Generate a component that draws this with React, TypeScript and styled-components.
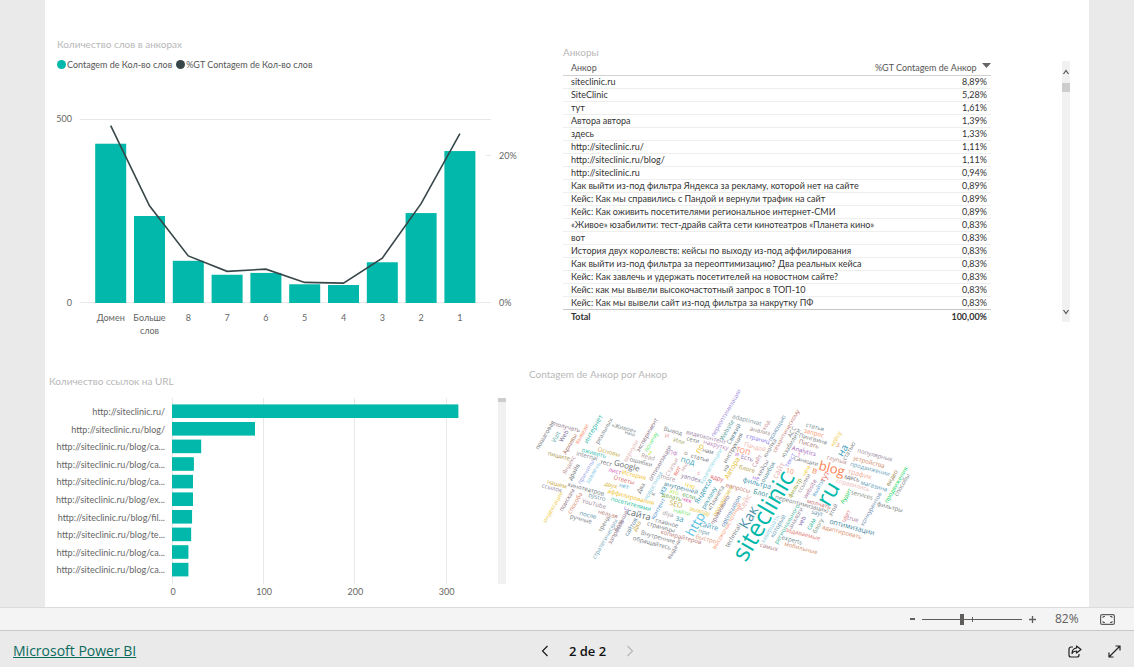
import React from "react";
import styled, { createGlobalStyle } from "styled-components";

const TEAL = "#01b8aa";
const SLATE = "#374649";

const GlobalStyle = createGlobalStyle`
  * { box-sizing: border-box; }
  html, body { margin: 0; padding: 0; }
  body {
    background: #eaeaea;
    color: #333;
    font-family: Lato, "Open Sans", sans-serif;
    font-size: 9px;
    line-height: 13px;
  }
  button { font: inherit; color: inherit; }
`;

const Page = styled.div`
  display: flex;
  flex-direction: column;
  min-height: 100vh;
`;

const Report = styled.main`
  flex: 1;
  margin: 0 45px;
  background: #fff;
  display: grid;
  grid-template-columns: minmax(0, 480fr) minmax(0, 564fr);
  grid-template-rows: auto 1fr;
`;

const Panel = styled.section<{ $pad: string }>`
  padding: ${(p) => p.$pad};
  min-width: 0;
`;

const Title = styled.h2<{ $inset?: number }>`
  margin: 0 0 0 ${(p) => p.$inset ?? 0}px;
  font-size: 10px;
  line-height: 14px;
  font-weight: 400;
  color: #b8b8b8;
  white-space: nowrap;
`;

const Legend = styled.ul`
  list-style: none;
  margin: 7px 0 9px 12px;
  padding: 0;
  display: flex;
  gap: 4px;
  color: #555;
  white-space: nowrap;
`;

const LegendItem = styled.li<{ $color: string }>`
  display: flex;
  align-items: center;
  gap: 1px;
  &::before {
    content: "";
    width: 9px;
    height: 9px;
    border-radius: 50%;
    background: ${(p) => p.$color};
  }
`;

const Chart = styled.svg`
  display: block;
  width: 100%;
  height: auto;
  text {
    font-size: 9px;
    fill: #666;
  }
`;

const ChartRow = styled.div`
  display: flex;
  align-items: flex-start;
  margin-top: 10px;
`;

const TableRow = styled.div`
  display: flex;
  align-items: flex-start;
  justify-content: space-between;
  margin-top: 2px;
`;

const Table = styled.table`
  width: 428px;
  margin-top: 1px;
  table-layout: fixed;
  border-collapse: collapse;
  white-space: nowrap;
  th, td { padding: 0 4px 0 8px; height: 13px; line-height: 12px; text-align: left; }
  th:first-child { width: 71%; }
  th:last-child, td:last-child { text-align: right; }
  tbody tr { border-bottom: 1px solid #eee; }
  thead th { font-weight: 400; color: #555; border-bottom: 1px solid #d2d2d2; }
  tfoot td { font-weight: 700; height: 15px; border-top: 1px solid #c8c8c8; }
`;

const SortArrow = styled.svg`
  width: 9px;
  height: 5px;
  margin-left: 5px;
  vertical-align: 3px;
`;

const Scrollbar = styled.div<{ $height: number }>`
  flex: none;
  width: 8px;
  height: ${(p) => p.$height}px;
  background: #f1f1f1;
  display: flex;
  flex-direction: column;
  align-items: center;
`;

const Thumb = styled.div<{ $height: number }>`
  width: 8px;
  height: ${(p) => p.$height}px;
  background: #cdcdcd;
`;

const ScrollArrow = styled.svg<{ $end?: boolean }>`
  width: 6px;
  height: 6px;
  margin: ${(p) => (p.$end ? "auto 0 7px" : "8px 0")};
`;

const Cloud = styled.svg`
  display: block;
  width: 100%;
  height: auto;
  margin-top: 3px;
  font-family: "Open Sans", "Noto Sans", sans-serif;
`;

const StatusBar = styled.div`
  height: 24px;
  background: #f4f4f4;
  border-top: 1px solid #dcdcdc;
  border-bottom: 1px solid #c8c8c8;
  display: flex;
  align-items: center;
  justify-content: flex-end;
  padding-right: 19px;
  color: #605e5c;
  font-family: "Open Sans", "Noto Sans", sans-serif;
  font-size: 12px;
`;

const ZoomButton = styled.button`
  border: 0;
  background: none;
  padding: 0;
  width: 20px;
  height: 22px;
  display: flex;
  align-items: center;
  justify-content: center;
`;

const SliderWrap = styled.div`
  display: flex;
  width: 100px;
  background: linear-gradient(#605e5c, #605e5c) center / 1px 5px no-repeat;
`;

const Slider = styled.input`
  appearance: none;
  width: 100%;
  height: 12px;
  margin: 0;
  background: linear-gradient(#605e5c, #605e5c) center / 100% 1px no-repeat;
  &::-webkit-slider-thumb {
    appearance: none;
    width: 4px;
    height: 11px;
    background: #605e5c;
  }
`;

const Percent = styled.output`
  width: 26px;
  margin: 0 19px 0 13px;
  font-size: 12px;
  line-height: 16px;
`;

const Footer = styled.footer`
  height: 36px;
  display: grid;
  grid-template-columns: 1fr auto 1fr;
  align-items: center;
  padding: 4px 13px 0;
  font-family: "Open Sans", "Noto Sans", sans-serif;
`;

const BrandLink = styled.a`
  color: #0b6a5d;
  font-size: 14px;
  line-height: 18px;
  text-decoration: underline;
`;

const Pager = styled.nav`
  display: flex;
  align-items: center;
  gap: 20px;
  margin-left: 41px;
  color: #111;
  font-size: 13px;
  line-height: 18px;
  font-weight: 600;
`;

const Actions = styled.div`
  display: flex;
  justify-content: flex-end;
  gap: 26px;
  color: #222;
`;

const IconButton = styled.button`
  border: 0;
  background: none;
  padding: 0;
  display: flex;
  &:disabled { color: #b5b5b5; }
`;

/* ---------- combo chart ---------- */

const wordCounts = [
  { label: ["Домен"], count: 434, share: 24.1 },
  { label: ["Больше", "слов"], count: 237, share: 13.2 },
  { label: ["8"], count: 115, share: 6.4 },
  { label: ["7"], count: 77, share: 4.3 },
  { label: ["6"], count: 82, share: 4.6 },
  { label: ["5"], count: 51, share: 2.8 },
  { label: ["4"], count: 49, share: 2.7 },
  { label: ["3"], count: 111, share: 6.1 },
  { label: ["2"], count: 245, share: 13.5 },
  { label: ["1"], count: 414, share: 23 },
];

function ComboChart() {
  const base = 223;
  const cx = (i: number) => 65.7 + i * 38.8;
  const points = wordCounts.map((d, i) => `${cx(i)},${base - d.share * 7.36}`).join(" ");
  return (
    <Chart viewBox="0 0 480 260" role="img" aria-label="Количество слов в анкорах">
      <path d="M35 39.5H446M35 222.5H446M441 75.5H446" stroke="#e8e8e8" fill="none" />
      {wordCounts.map((d, i) => (
        <rect key={i} x={cx(i) - 15.5} y={base - d.count * 0.367} width={31} height={d.count * 0.367} fill={TEAL} />
      ))}
      <polyline points={points} fill="none" stroke={SLATE} strokeWidth="1.6" />
      <text x="27" y="42" textAnchor="end">500</text>
      <text x="27" y="226" textAnchor="end">0</text>
      <text x="454" y="79">20%</text>
      <text x="454" y="226">0%</text>
      {wordCounts.map((d, i) =>
        d.label.map((line, j) => (
          <text key={line} x={cx(i)} y={241 + j * 13} textAnchor="middle">{line}</text>
        ))
      )}
    </Chart>
  );
}

/* ---------- url chart ---------- */

const urls: [string, number][] = [
  ["http://siteclinic.ru/", 314],
  ["http://siteclinic.ru/blog/", 91],
  ["http://siteclinic.ru/blog/ca...", 32],
  ["http://siteclinic.ru/blog/ca...", 24],
  ["http://siteclinic.ru/blog/ca...", 23],
  ["http://siteclinic.ru/blog/ex...", 23],
  ["http://siteclinic.ru/blog/fil...", 22],
  ["http://siteclinic.ru/blog/te...", 21],
  ["http://siteclinic.ru/blog/ca...", 18],
  ["http://siteclinic.ru/blog/ca...", 18],
];

function UrlChart() {
  const x0 = 127;
  const unit = 0.912;
  return (
    <Chart viewBox="0 0 453 204" role="img" aria-label="Количество ссылок на URL">
      {[0, 100, 200, 300].map((v) => (
        <g key={v}>
          <path d={`M${Math.round(x0 + v * unit) + 0.5} 0V186`} stroke="#e8e8e8" />
          <text x={x0 + v * unit + 1} y="197" textAnchor="middle">{v}</text>
        </g>
      ))}
      {urls.map(([label, value], i) => (
        <g key={i}>
          <text x="120" y={17 + i * 17.6} textAnchor="end">{label}</text>
          <rect x={x0} y={6.4 + i * 17.6} width={value * unit} height="13.6" fill={TEAL} />
        </g>
      ))}
    </Chart>
  );
}

/* ---------- table ---------- */

const anchors: [string, string][] = [
  ["siteclinic.ru", "8,89%"],
  ["SiteClinic", "5,28%"],
  ["тут", "1,61%"],
  ["Автора автора", "1,39%"],
  ["здесь", "1,33%"],
  ["http://siteclinic.ru/", "1,11%"],
  ["http://siteclinic.ru/blog/", "1,11%"],
  ["http://siteclinic.ru", "0,94%"],
  ["Как выйти из-под фильтра Яндекса за рекламу, которой нет на сайте", "0,89%"],
  ["Кейс: Как мы справились с Пандой и вернули трафик на сайт", "0,89%"],
  ["Кейс: Как оживить посетителями региональное интернет-СМИ", "0,89%"],
  ["«Живое» юзабилити: тест-драйв сайта сети кинотеатров «Планета кино»", "0,83%"],
  ["вот", "0,83%"],
  ["История двух королевств: кейсы по выходу из-под аффилирования", "0,83%"],
  ["Как выйти из-под фильтра за переоптимизацию? Два реальных кейса", "0,83%"],
  ["Кейс: Как завлечь и удержать посетителей на новостном сайте?", "0,83%"],
  ["Кейс: как мы вывели высокочастотный запрос в ТОП-10", "0,83%"],
  ["Кейс: Как мы вывели сайт из-под фильтра за накрутку ПФ", "0,83%"],
];

/* ---------- word cloud: text, centre x, centre y, size, direction, colour ---------- */

type Word = [string, number, number, number, "up" | "down", string];

const words: Word[] = [
  ["siteclinic", 762, 514, 25, "up", TEAL],
  ["ru", 827, 492, 23, "up", TEAL],
  ["http", 695, 523, 13, "up", "#5cc0e0"],
  ["Как", 748, 516, 14, "up", "#4a8fa8"],
  ["blog", 832, 467, 13, "down", "#fd7f50"],
  ["сайта", 639, 513, 9, "down", "#5f6b6d"],
  ["на", 842, 449, 10, "up", "#3599b8"],
  ["Google", 627, 464, 8, "down", "#5f6b6d"],
  ["пошаговая", 545, 434, 6, "up", "#6b7073"],
  ["получать", 567, 426, 6, "down", "#8c7386"],
  ["Vizit", 556, 436, 6, "up", "#4a9aa0"],
  ["Web", 564, 435, 6, "up", "#74658f"],
  ["Архивы", 570, 443, 6, "up", "#a66f5c"],
  ["вывели", 582, 433, 6, "up", "#fd8f70"],
  ["интернет", 593, 428, 7, "up", "#36b8ac"],
  ["реальных", 604, 430, 6, "up", "#7b8284"],
  ["«Живое»", 624, 427, 6, "down", "#7d8a8c"],
  ["наш", 630, 432, 5, "down", "#6f8690"],
  ["эксперимент", 647, 434, 6, "up", "#7f6b7d"],
  ["почему", 651, 441, 6, "up", "#5fe87c"],
  ["вернули", 631, 450, 6, "up", "#e3b5b8"],
  ["2", 650, 452, 6, "down", "#b8e010"],
  ["Read", 648, 456, 6, "down", "#b09a93"],
  ["ошибки", 641, 461, 6, "down", "#777c7e"],
  ["оптимизации", 660, 462, 6, "up", "#7d6f86"],
  ["оживить", 594, 452, 6, "down", "#33bdb0"],
  ["Основы", 609, 451, 6, "down", "#c6a63c"],
  ["пишите", 559, 455, 6, "down", "#a59040"],
  ["internal", 587, 455, 6, "down", "#827f8c"],
  ["тест", 606, 462, 6, "down", "#6b7073"],
  ["лист", 615, 470, 6, "down", "#d650b8"],
  ["История", 634, 474, 6, "down", "#efc124"],
  ["Яндекс", 569, 464, 6, "up", "#c09494"],
  ["драйв", 574, 471, 6, "up", "#6b7073"],
  ["причины", 586, 471, 6, "up", "#97a3ea"],
  ["завлечь", 593, 472, 6, "up", "#84cbe4"],
  ["Ответы", 624, 479, 6, "down", "#d67270"],
  ["новостном", 653, 485, 6, "up", "#7fc9e0"],
  ["нашем", 557, 483, 6, "down", "#c8a638"],
  ["ссылок", 552, 487, 6, "down", "#8d86a0"],
  ["кинотеатров", 586, 488, 6, "down", "#6d7476"],
  ["bystro", 597, 496, 6, "down", "#7397a3"],
  ["YouTube", 594, 503, 6, "down", "#a08899"],
  ["поискам", 567, 499, 6, "up", "#8b6b7a"],
  ["способа", 575, 502, 6, "up", "#d98469"],
  ["индексации", 553, 506, 6, "up", "#efcb48"],
  ["после", 588, 514, 6, "down", "#4d8fa5"],
  ["ручные", 581, 518, 6, "down", "#747a7c"],
  ["нельзя", 608, 513, 6, "down", "#b0766c"],
  ["тренд", 604, 523, 6, "up", "#7a7a7a"],
  ["стратегических", 605, 538, 6, "up", "#74a5ba"],
  ["больше", 621, 520, 6, "up", "#8c7890"],
  ["запросов", 616, 531, 6, "up", "#8f7586"],
  ["сайтов", 631, 526, 6, "up", "#54809f"],
  ["Два", 637, 525, 6, "up", "#c6a63c"],
  ["с", 625, 507, 8, "up", "#a091e8"],
  ["двух", 611, 484, 6, "down", "#d9b332"],
  ["нет", 624, 485, 6, "down", "#4aa9cc"],
  ["аффилирования", 631, 496, 6, "down", "#efc124"],
  ["посетителями", 631, 503, 6, "down", "#20c0a0"],
  ["Два", 641, 487, 6, "up", "#777"],
  ["к", 653, 493, 6, "up", "#777"],
  ["контент", 658, 508, 6, "up", "#4a8fd0"],
  ["из", 662, 489, 8, "up", "#3599b8"],
  ["внутренней", 681, 487, 6, "down", "#418399"],
  ["more", 668, 477, 6, "down", "#a58f98"],
  ["yandex", 691, 477, 6, "down", "#8878a0"],
  ["Что", 690, 485, 6, "down", "#f2c80f"],
  ["Яндекса", 703, 490, 7, "up", "#2f98b0"],
  ["рекламу", 709, 497, 6, "up", "#40a0b0"],
  ["если", 689, 495, 6, "down", "#5ea84f"],
  ["чек", 687, 499, 6, "down", "#d94fa9"],
  ["это", 674, 491, 6, "down", "#b4ee40"],
  ["делать", 672, 496, 6, "down", "#6fa838"],
  ["SEO", 676, 503, 7, "down", "#c4a741"],
  ["выходу", 700, 510, 6, "down", "#e8c840"],
  ["найти", 682, 511, 6, "down", "#7ce878"],
  ["dlya", 668, 513, 6, "down", "#a99aa5"],
  ["за", 680, 517, 8, "down", "#3f9fb5"],
  ["главное", 667, 522, 6, "down", "#777d80"],
  ["страницы", 661, 526, 6, "down", "#747a7c"],
  ["сайте", 709, 525, 7, "down", "#3f9ac0"],
  ["при", 704, 531, 6, "down", "#6e9aaa"],
  ["Внутренние", 658, 536, 6, "down", "#777d80"],
  ["обращайтесь", 652, 542, 6, "down", "#777d80"],
  ["копирайтеров", 681, 536, 6, "down", "#b87870"],
  ["быстро", 706, 538, 6, "down", "#e09878"],
  ["выдачи", 674, 548, 6, "up", "#7c7888"],
  ["«Планета", 716, 497, 6, "up", "#777"],
  ["продвигаем", 723, 500, 6, "up", "#dfbb42"],
  ["правильно", 720, 509, 6, "up", "#8a7183"],
  ["высокочастотный", 727, 525, 6, "up", "#fb9a78"],
  ["ядру", 717, 477, 6, "down", "#e05a5e"],
  ["переоптимизации", 726, 412, 6, "up", "#9a8ad8"],
  ["Вывод", 673, 430, 6, "down", "#7d838a"],
  ["И", 667, 435, 6, "down", "#e7a0a4"],
  ["Или", 679, 440, 6, "down", "#a5a765"],
  ["видеоконтент", 706, 436, 6, "down", "#9b7fa5"],
  ["сети", 693, 439, 6, "down", "#777"],
  ["накрутку", 716, 444, 6, "down", "#b583b3"],
  ["по", 699, 447, 8, "up", "#e7bd26"],
  ["нам", 708, 450, 6, "down", "#6d7476"],
  ["о", 686, 452, 6, "down", "#a27f70"],
  ["статье", 700, 457, 6, "down", "#6d7476"],
  ["ПФ", 673, 452, 6, "down", "#bd7dc0"],
  ["под", 688, 459, 8, "down", "#3d9fb8"],
  ["Статьи", 672, 466, 6, "up", "#c59a9e"],
  ["вот", 677, 470, 6, "up", "#f25c55"],
  ["мы", 684, 466, 6, "up", "#d09f9f"],
  ["с", 699, 472, 6, "down", "#e18f8f"],
  ["компетенции", 711, 465, 6, "up", "#8cd6e8"],
  ["Website", 727, 429, 6, "up", "#4d9a95"],
  ["Свежий", 734, 433, 6, "up", "#4e7a88"],
  ["инструкция", 733, 447, 6, "up", "#6b7073"],
  ["adaptinvat", 747, 419, 6, "down", "#7f959a"],
  ["код", 766, 424, 6, "up", "#c98f98"],
  ["анализ", 760, 430, 6, "down", "#9c8a83"],
  ["страниц", 758, 438, 6, "down", "#8678e8"],
  ["помощью", 777, 427, 6, "up", "#5f8fb3"],
  ["Пандой", 755, 446, 6, "down", "#f0b1a8"],
  ["ТОП", 743, 450, 7, "down", "#fd8058"],
  ["и", 737, 453, 6, "down", "#b15ec0"],
  ["Есть", 747, 457, 6, "down", "#8c68a8"],
  ["Сайт", 757, 460, 6, "up", "#c08095"],
  ["кейсы", 763, 467, 6, "up", "#80798a"],
  ["кнопка", 770, 447, 6, "up", "#777d80"],
  ["на", 726, 467, 6, "up", "#6b7073"],
  ["Автора", 732, 467, 7, "up", "#e4ba1c"],
  ["блоге", 747, 468, 6, "down", "#b49a3e"],
  ["ошибок", 768, 471, 6, "up", "#4f8b98"],
  ["не", 756, 477, 6, "down", "#a06bd8"],
  ["фильтра", 757, 482, 7, "down", "#3b97ae"],
  ["вопросы", 738, 487, 6, "down", "#c77f72"],
  ["Блог", 761, 492, 7, "down", "#3c8f9a"],
  ["семантическому", 786, 430, 6, "up", "#c87f78"],
  ["АСС", 792, 431, 6, "up", "#7a7a7a"],
  ["юзабилити", 791, 442, 6, "up", "#6f7f7f"],
  ["статья", 815, 426, 6, "down", "#6f8a90"],
  ["запрос", 814, 432, 6, "down", "#fd8f65"],
  ["Пингвина", 813, 438, 6, "down", "#747a7c"],
  ["Писать", 809, 443, 6, "down", "#a87370"],
  ["Analytics", 804, 450, 6, "down", "#a05cb4"],
  ["1", 799, 454, 6, "down", "#ef70c0"],
  ["Санкции", 806, 460, 6, "down", "#777d80"],
  ["текст", 790, 459, 6, "up", "#8d86f0"],
  ["кейсу", 836, 438, 6, "up", "#efcb48"],
  ["3", 838, 444, 6, "down", "#e39a70"],
  ["статью", 849, 450, 6, "up", "#7a7a7a"],
  ["популярных", 875, 454, 6, "down", "#94869a"],
  ["устройства", 869, 461, 6, "down", "#cf8560"],
  ["глупых", 837, 459, 6, "down", "#b88a88"],
  ["продвижении", 870, 468, 6, "down", "#6aa3bc"],
  ["трафик", 860, 473, 7, "down", "#f2b0a0"],
  ["здесь", 852, 477, 6, "down", "#5f6b6d"],
  ["справились", 853, 484, 6, "down", "#e8b8b0"],
  ["магазина", 874, 485, 6, "down", "#5a9ab8"],
  ["видео", 892, 477, 6, "up", "#9a8150"],
  ["продвижения", 896, 484, 6, "up", "#23d867"],
  ["способы", 902, 484, 6, "up", "#80898b"],
  ["сайт", 778, 469, 8, "up", "#eab0ae"],
  ["10", 790, 470, 7, "down", "#fd8f65"],
  ["чем", 806, 470, 6, "up", "#f2cb30"],
  ["в", 815, 469, 9, "down", "#fd8f65"],
  ["тут", 824, 475, 8, "up", "#ef6a60"],
  ["фильтр", 795, 487, 6, "up", "#94a030"],
  ["ссылки", 804, 482, 6, "up", "#8c8a8e"],
  ["website", 810, 488, 6, "up", "#a86f9a"],
  ["выйти", 818, 487, 6, "up", "#52a0c8"],
  ["Аудит", 846, 495, 6, "up", "#1fd05f"],
  ["services", 862, 494, 6, "down", "#7e8a76"],
  ["конкурентов", 871, 508, 6, "up", "#7290b0"],
  ["фильтры", 890, 506, 6, "down", "#747a7c"],
  ["этой", 833, 509, 6, "up", "#777"],
  ["true", 853, 518, 6, "down", "#b07ba0"],
  ["цвет", 846, 515, 6, "up", "#df8188"],
  ["оптимизации", 852, 526, 7, "down", "#3f86a0"],
  ["адаптировать", 842, 531, 6, "down", "#d88c68"],
  ["сам", 811, 523, 7, "up", "#30b8a0"],
  ["блогу", 818, 525, 6, "up", "#7b9484"],
  ["sayt", 817, 512, 6, "down", "#5a8fa8"],
  ["молчать", 819, 503, 6, "down", "#c86f72"],
  ["переоптимизацию", 802, 503, 6, "down", "#7a7f82"],
  ["регионального", 787, 523, 6, "up", "#45b8a0"],
  ["аналоги", 796, 517, 6, "up", "#8b7f90"],
  ["veb", 802, 520, 6, "up", "#7260a8"],
  ["который", 778, 525, 6, "up", "#6098b0"],
  ["завершать", 770, 528, 6, "up", "#8fd0e4"],
  ["задаваемые", 803, 533, 6, "down", "#e28078"],
  ["experts", 792, 539, 6, "down", "#6f8a94"],
  ["мобильные", 801, 547, 6, "down", "#d38c68"],
  ["самых", 769, 546, 6, "down", "#b08088"],
  ["technical", 733, 535, 6, "up", "#6b7073"],
  ["optimization", 731, 510, 6, "up", "#5285b5"],
  ["Кейс", 744, 501, 8, "up", "#f0b8b6"],
];

function WordCloud() {
  return (
    <Cloud viewBox="529 383 560 202" role="img" aria-label="Contagem de Анкор por Анкор">
      {words.map(([text, x, y, size, dir, color], i) => (
        <text
          key={i}
          transform={`translate(${x} ${y}) rotate(${dir === "up" ? -60 : 15})`}
          fontSize={size}
          fill={color}
          textAnchor="middle"
          dominantBaseline="central"
        >
          {text}
        </text>
      ))}
    </Cloud>
  );
}

export default function App() {
  return (
    <Page>
      <GlobalStyle />
      <Report>
        <Panel $pad="37px 0 24px">
          <Title $inset={12}>Количество слов в анкорах</Title>
          <Legend>
            <LegendItem $color={TEAL}>Contagem de Кол-во слов</LegendItem>
            <LegendItem $color={SLATE}>%GT Contagem de Кол-во слов</LegendItem>
          </Legend>
          <ComboChart />
        </Panel>

        <Panel $pad="45px 19px 0 38px">
          <Title>Анкоры</Title>
          <TableRow>
            <Table>
              <thead>
                <tr>
                  <th scope="col">Анкор</th>
                  <th scope="col">
                    %GT Contagem de Анкор
                    <SortArrow viewBox="0 0 9 5"><path d="M0 0h9L4.500 5z" fill="#666" /></SortArrow>
                  </th>
                </tr>
              </thead>
              <tbody>
                {anchors.map(([name, share]) => (
                  <tr key={name}>
                    <td>{name}</td>
                    <td>{share}</td>
                  </tr>
                ))}
              </tbody>
              <tfoot>
                <tr>
                  <td>Total</td>
                  <td>100,00%</td>
                </tr>
              </tfoot>
            </Table>
            <Scrollbar $height={261}>
              <ScrollArrow viewBox="0 0 6 6"><path d="M.5 5 3 1.500 5.500 5" fill="none" stroke="#555" strokeWidth="1.200" /></ScrollArrow>
              <Thumb $height={9} />
              <ScrollArrow $end viewBox="0 0 6 6"><path d="M.5 1 3 4.500 5.500 1" fill="none" stroke="#555" strokeWidth="1.200" /></ScrollArrow>
            </Scrollbar>
          </TableRow>
        </Panel>

        <Panel $pad="10px 19px 0 0">
          <Title $inset={4}>Количество ссылок на URL</Title>
          <ChartRow>
            <UrlChart />
            <Scrollbar $height={186}>
              <Thumb $height={4} />
            </Scrollbar>
          </ChartRow>
        </Panel>

        <Panel $pad="3px 0 0 4px">
          <Title>Contagem de Анкор por Анкор</Title>
          <WordCloud />
        </Panel>
      </Report>

      <StatusBar>
        <ZoomButton aria-label="Zoom out">
          <svg width="5" height="2"><path d="M0 1h5" stroke="#605e5c" strokeWidth="2" /></svg>
        </ZoomButton>
        <SliderWrap>
          <Slider type="range" min={0} max={200} defaultValue={80} aria-label="Zoom" />
        </SliderWrap>
        <ZoomButton aria-label="Zoom in">
          <svg width="7" height="7"><path d="M0 3.500h7M3.500 0v7" stroke="#605e5c" strokeWidth="1.300" /></svg>
        </ZoomButton>
        <Percent>82%</Percent>
        <IconButton aria-label="Fit to page">
          <svg width="15" height="11" viewBox="0 0 15 11" fill="none" stroke="#605e5c">
            <rect x=".6" y=".6" width="13.800" height="9.800" rx="1.500" strokeWidth="1.200" />
            <path d="M5 2.500H3V4M3 7v1.500h2M10 2.500h2V4M12 7v1.500h-2" />
          </svg>
        </IconButton>
      </StatusBar>

      <Footer>
        <div>
          <BrandLink href="#powerbi">Microsoft Power BI</BrandLink>
        </div>
        <Pager aria-label="Pages">
          <IconButton aria-label="Previous page">
            <svg width="8" height="12" viewBox="0 0 8 12" fill="none" stroke="currentColor" strokeWidth="1.100"><path d="M6.500 1 1.500 6l5 5" /></svg>
          </IconButton>
          <span>2 de 2</span>
          <IconButton aria-label="Next page" disabled>
            <svg width="8" height="12" viewBox="0 0 8 12" fill="none" stroke="currentColor" strokeWidth="1.100"><path d="m1.500 1 5 5-5 5" /></svg>
          </IconButton>
        </Pager>
        <Actions>
          <IconButton aria-label="Share">
            <svg width="14" height="13" viewBox="0 0 14 13" fill="none" stroke="currentColor" strokeWidth="1.200">
              <path d="M5 2H3a2 2 0 0 0-2 2v6a2 2 0 0 0 2 2h6a2 2 0 0 0 2-2V9" />
              <path d="M8.500 1 13 4.500 8.500 8V6C6 6 4.800 7 4 8.500 4.200 5.200 5.800 3.200 8.500 3z" strokeLinejoin="round" />
            </svg>
          </IconButton>
          <IconButton aria-label="Full screen">
            <svg width="13" height="13" viewBox="0 0 13 13" fill="none" stroke="currentColor" strokeWidth="1.200">
              <path d="M1 12 12 1M7.500 1H12v4.500M1 7.500V12h4.500" />
            </svg>
          </IconButton>
        </Actions>
      </Footer>
    </Page>
  );
}
